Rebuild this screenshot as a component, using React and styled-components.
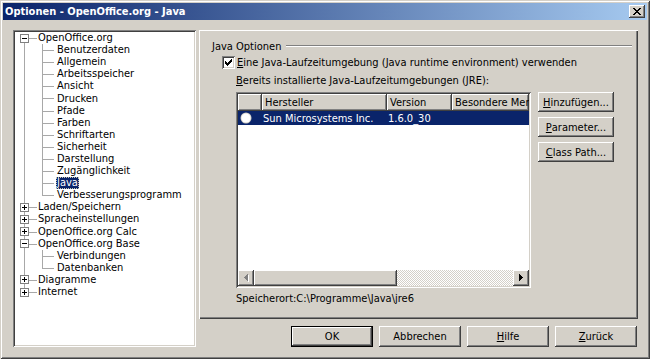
import React from 'react'
import styled, { createGlobalStyle, css } from 'styled-components'

const GlobalStyle = createGlobalStyle`
  html, body {
    margin: 0;
    padding: 0;
    background: #d4d0c8;
  }
  body {
    font-family: "DejaVu Sans Condensed", "Liberation Sans", sans-serif;
    font-size: 11px;
    color: #000;
  }
`

const raised = css`
  background: #d4d0c8;
  box-shadow: inset -1px -1px #404040, inset 1px 1px #fff,
    inset -2px -2px #808080, inset 2px 2px #d4d0c8;
`

const sunken = css`
  box-shadow: inset 1px 1px #808080, inset -1px -1px #fff,
    inset 2px 2px #404040, inset -2px -2px #d4d0c8;
`

const LINE = '#a8a8a8'
const SELECT = '#0a246a'

const Window = styled.div`
  width: 650px;
  height: 359px;
  box-sizing: border-box;
  padding: 3px;
  background: #d4d0c8;
  box-shadow: inset 1px 1px #d4d0c8, inset -1px -1px #404040,
    inset 2px 2px #fff, inset -2px -2px #808080;
  display: flex;
  flex-direction: column;
`

const TitleBar = styled.div`
  height: 17px;
  flex-shrink: 0;
  display: flex;
  align-items: center;
  justify-content: space-between;
  padding: 0 2px 0 2px;
  background: linear-gradient(to right, #0a246a, #a6caf0);
`

const Title = styled.span`
  color: #fff;
  font-weight: bold;
  font-size: 11px;
  white-space: nowrap;
`

const CloseButton = styled.div`
  ${raised};
  width: 16px;
  height: 13px;
  display: flex;
  align-items: center;
  justify-content: center;
`

const Body = styled.div`
  flex: 1;
  display: flex;
  gap: 3px;
  padding: 10px 9px 9px 10px;
  min-height: 0;
`

/* ---------- tree ---------- */

const Tree = styled.div`
  ${sunken};
  width: 183px;
  flex-shrink: 0;
  box-sizing: border-box;
  padding: 2px;
  background: #fff;
  overflow: hidden;
`

const TreeRow = styled.div`
  height: 12.1px;
  display: flex;
  align-items: center;
  white-space: nowrap;
  line-height: 12px;
`

const vLine = (x, top, h) =>
  `linear-gradient(${LINE}, ${LINE}) no-repeat ${x}px ${top}px / 1px ${h}`

const hLine = (x, w) =>
  `linear-gradient(${LINE}, ${LINE}) no-repeat ${x}px 6px / ${w}px 1px`

const TrunkCell = styled.div`
  width: 22px;
  height: 100%;
  flex-shrink: 0;
  display: flex;
  align-items: center;
  background: ${({ $pos, $branch }) => {
    const v =
      $pos === 'first'
        ? vLine(9, 6, '7px')
        : $pos === 'last'
        ? vLine(9, 0, '7px')
        : vLine(9, 0, '100%')
    return $branch ? `${v}, ${hLine(9, 13)}` : v
  }};
`

const BranchCell = styled.div`
  width: 19px;
  height: 100%;
  flex-shrink: 0;
  background: ${({ $last }) =>
    `${$last ? vLine(5, 0, '7px') : vLine(5, 0, '100%')}, ${hLine(5, 12)}`};
`

const Expander = styled.div`
  width: 9px;
  height: 9px;
  box-sizing: border-box;
  margin-left: 5px;
  border: 1px solid #808080;
  background: #fff;
  position: relative;
  display: flex;
  align-items: center;
  justify-content: center;

  &::before {
    content: '';
    width: 5px;
    height: 1px;
    background: #000;
  }
  &::after {
    content: '';
    display: ${({ $open }) => ($open ? 'none' : 'block')};
    position: absolute;
    left: 3px;
    top: 1px;
    width: 1px;
    height: 5px;
    background: #000;
  }
`

const TreeLabel = styled.span`
  padding: 0 1px;
  ${({ $selected }) =>
    $selected &&
    css`
      background: ${SELECT};
      color: #fff;
      outline: 1px dotted #c8c8b0;
      outline-offset: -1px;
    `}
`

const treeItems = [
  { label: 'OpenOffice.org', open: true, pos: 'first' },
  { label: 'Benutzerdaten', child: true },
  { label: 'Allgemein', child: true },
  { label: 'Arbeitsspeicher', child: true },
  { label: 'Ansicht', child: true },
  { label: 'Drucken', child: true },
  { label: 'Pfade', child: true },
  { label: 'Farben', child: true },
  { label: 'Schriftarten', child: true },
  { label: 'Sicherheit', child: true },
  { label: 'Darstellung', child: true },
  { label: 'Zugänglichkeit', child: true },
  { label: 'Java', child: true, selected: true },
  { label: 'Verbesserungsprogramm', child: true, last: true },
  { label: 'Laden/Speichern' },
  { label: 'Spracheinstellungen' },
  { label: 'OpenOffice.org Calc' },
  { label: 'OpenOffice.org Base', open: true },
  { label: 'Verbindungen', child: true },
  { label: 'Datenbanken', child: true, last: true },
  { label: 'Diagramme' },
  { label: 'Internet', pos: 'last' },
]

const OptionTree = () => (
  <Tree>
    {treeItems.map((item) => (
      <TreeRow key={item.label}>
        {item.child ? (
          <>
            <TrunkCell $pos="mid" />
            <BranchCell $last={item.last} />
          </>
        ) : (
          <TrunkCell $pos={item.pos || 'mid'} $branch>
            <Expander $open={item.open} />
          </TrunkCell>
        )}
        <TreeLabel $selected={item.selected}>{item.label}</TreeLabel>
      </TreeRow>
    ))}
  </Tree>
)

/* ---------- right side ---------- */

const RightCol = styled.div`
  flex: 1;
  display: flex;
  flex-direction: column;
  gap: 7px;
  min-width: 0;
`

const Panel = styled.div`
  flex: 1;
  display: flex;
  flex-direction: column;
  padding: 9px 6px 0 13px;
  box-shadow: inset 1px 1px #fff, inset -1px -1px #404040,
    inset -2px -2px #808080;
`

const GroupHeader = styled.div`
  height: 14px;
  display: flex;
  align-items: center;
  gap: 5px;
  white-space: nowrap;
`

const Rule = styled.div`
  flex: 1;
  height: 0;
  border-top: 1px solid #808080;
  border-bottom: 1px solid #fff;
`

const CheckRow = styled.label`
  display: flex;
  align-items: center;
  gap: 2px;
  height: 13px;
  margin: 3px 0 0 10px;
  white-space: nowrap;
`

const CheckBox = styled.span`
  ${sunken};
  width: 13px;
  height: 13px;
  flex-shrink: 0;
  background: #fff;
  display: flex;
  align-items: center;
  justify-content: center;
`

const Content = styled.div`
  margin-left: 24px;
  display: flex;
  flex-direction: column;
`

const Caption = styled.div`
  line-height: 13px;
  margin-top: ${({ $gap }) => $gap}px;
  white-space: nowrap;
`

const Split = styled.div`
  margin-top: 5px;
  display: flex;
  gap: 7px;
  align-items: flex-start;
`

const Table = styled.div`
  ${sunken};
  width: 295px;
  height: 196px;
  box-sizing: border-box;
  padding: 2px;
  background: #fff;
  display: flex;
  flex-direction: column;
  overflow: hidden;
`

const HeaderRow = styled.div`
  height: 17px;
  display: flex;
  flex-shrink: 0;
`

const HeadCell = styled.div`
  ${raised};
  width: ${({ $w }) => ($w ? `${$w}px` : 'auto')};
  flex: ${({ $w }) => ($w ? '0 0 auto' : '1 1 0')};
  min-width: 0;
  box-sizing: border-box;
  padding-left: 3px;
  line-height: 17px;
  white-space: nowrap;
  overflow: hidden;
  text-overflow: clip;
`

const DataRow = styled.div`
  height: 14px;
  display: flex;
  align-items: center;
  flex-shrink: 0;
  background: ${({ $selected }) => ($selected ? SELECT : 'transparent')};
  color: ${({ $selected }) => ($selected ? '#fff' : '#000')};
`

const Cell = styled.div`
  width: ${({ $w }) => ($w ? `${$w}px` : 'auto')};
  flex: ${({ $w }) => ($w ? '0 0 auto' : '1 1 0')};
  min-width: 0;
  box-sizing: border-box;
  padding-left: ${({ $pad }) => $pad ?? 1}px;
  white-space: nowrap;
  overflow: hidden;
  display: flex;
  align-items: center;
`

const Filler = styled.div`
  flex: 1;
`

const ScrollBar = styled.div`
  height: 16px;
  display: flex;
  flex-shrink: 0;
`

const ArrowButton = styled.div`
  ${raised};
  width: 16px;
  height: 16px;
  flex-shrink: 0;
  display: flex;
  align-items: center;
  justify-content: center;
`

const Thumb = styled.div`
  ${raised};
  width: 143px;
  flex-shrink: 0;
`

const Track = styled.div`
  flex: 1;
  background: repeating-conic-gradient(#d4d0c8 0 25%, #fff 0 50%) 0 0 / 2px 2px;
`

const ButtonColumn = styled.div`
  display: flex;
  flex-direction: column;
  gap: 5px;
`

const Button = styled.div`
  ${raised};
  width: ${({ $w }) => $w}px;
  height: ${({ $h }) => $h}px;
  display: flex;
  align-items: center;
  justify-content: center;
  white-space: nowrap;
  ${({ $default }) =>
    $default &&
    css`
      box-shadow: inset 0 0 0 1px #000, inset -2px -2px #404040,
        inset 2px 2px #fff, inset -3px -3px #808080;
    `}
`

const ButtonBar = styled.div`
  height: 21px;
  flex-shrink: 0;
  display: flex;
  justify-content: flex-end;
  gap: 6px;
  padding-right: 1px;
`

const CloseGlyph = () => (
  <svg width="8" height="7" viewBox="0 0 8 7" shapeRendering="crispEdges">
    <path
      fill="#000"
      d="M0 0h2v1H0zM6 0h2v1H6zM1 1h2v1H1zM5 1h2v1H5zM2 2h4v1H2zM3 3h2v1H3zM2 4h4v1H2zM1 5h2v1H1zM5 5h2v1H5zM0 6h2v1H0zM6 6h2v1H6z"
    />
  </svg>
)

const CheckGlyph = () => (
  <svg width="7" height="7" viewBox="0 0 7 7" shapeRendering="crispEdges">
    <path
      fill="#000"
      d="M6 0h1v1H6zM5 1h2v1H5zM0 2h1v1H0zM4 2h3v1H4zM0 3h2v1H0zM3 3h3v1H3zM0 4h5v1H0zM1 5h3v1H1zM2 6h1v1H2z"
    />
  </svg>
)

const ArrowGlyph = ({ dir, disabled }) => {
  const d =
    dir === 'right'
      ? 'M0 0h1v7H0zM1 1h1v5H1zM2 2h1v3H2zM3 3h1v1H3z'
      : 'M3 0h1v7H3zM2 1h1v5H2zM1 2h1v3H1zM0 3h1v1H0z'
  return (
    <svg width="5" height="8" viewBox="0 0 5 8" shapeRendering="crispEdges">
      {disabled && <path fill="#fff" d={d} transform="translate(1 1)" />}
      <path fill={disabled ? '#808080' : '#000'} d={d} />
    </svg>
  )
}

const RadioGlyph = () => (
  <svg width="12" height="12" viewBox="0 0 12 12">
    <circle cx="6" cy="6" r="5.5" fill="#d4d0c8" />
    <circle cx="6" cy="6" r="4.6" fill="#fff" />
  </svg>
)

const columns = [24, 125, 65]

const JreTable = () => (
  <Table>
    <HeaderRow>
      <HeadCell $w={columns[0]} />
      <HeadCell $w={columns[1]}>Hersteller</HeadCell>
      <HeadCell $w={columns[2]}>Version</HeadCell>
      <HeadCell>Besondere Merk</HeadCell>
    </HeaderRow>
    <DataRow $selected>
      <Cell $w={columns[0]} $pad={2}>
        <RadioGlyph />
      </Cell>
      <Cell $w={columns[1]}>Sun Microsystems Inc.</Cell>
      <Cell $w={columns[2]}>1.6.0_30</Cell>
      <Cell />
    </DataRow>
    <Filler />
    <ScrollBar>
      <ArrowButton>
        <ArrowGlyph dir="left" disabled />
      </ArrowButton>
      <Thumb />
      <Track />
      <ArrowButton>
        <ArrowGlyph dir="right" />
      </ArrowButton>
    </ScrollBar>
  </Table>
)

const App = () => (
  <>
    <GlobalStyle />
    <Window>
      <TitleBar>
        <Title>Optionen - OpenOffice.org - Java</Title>
        <CloseButton>
          <CloseGlyph />
        </CloseButton>
      </TitleBar>
      <Body>
        <OptionTree />
        <RightCol>
          <Panel>
            <GroupHeader>
              Java Optionen
              <Rule />
            </GroupHeader>
            <CheckRow>
              <CheckBox>
                <CheckGlyph />
              </CheckBox>
              <span>
                <u>E</u>ine Java-Laufzeitumgebung (Java runtime environment)
                verwenden
              </span>
            </CheckRow>
            <Content>
              <Caption $gap={5}>
                <u>B</u>ereits installierte Java-Laufzeitumgebungen (JRE):
              </Caption>
              <Split>
                <JreTable />
                <ButtonColumn>
                  <Button $w={76} $h={20}>
                    <u>H</u>inzufügen...
                  </Button>
                  <Button $w={76} $h={20}>
                    <u>P</u>arameter...
                  </Button>
                  <Button $w={76} $h={20}>
                    <u>C</u>lass Path...
                  </Button>
                </ButtonColumn>
              </Split>
              <Caption $gap={4}>Speicherort:C:\Programme\Java\jre6</Caption>
            </Content>
          </Panel>
          <ButtonBar>
            <Button $w={82} $h={21} $default>
              OK
            </Button>
            <Button $w={82} $h={21}>
              Abbrechen
            </Button>
            <Button $w={82} $h={21}>
              <u>H</u>ilfe
            </Button>
            <Button $w={82} $h={21}>
              <u>Z</u>urück
            </Button>
          </ButtonBar>
        </RightCol>
      </Body>
    </Window>
  </>
)

export default App
